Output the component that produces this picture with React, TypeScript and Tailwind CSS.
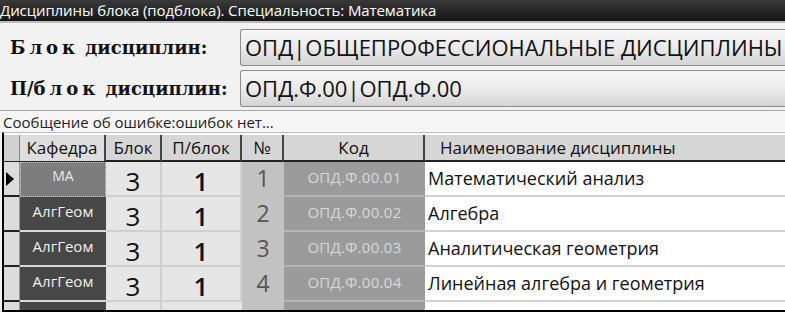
import React from "react";

const rows = [
  { kaf: "МА", n: "1", code: "ОПД.Ф.00.01", name: "Математический анализ", active: true },
  { kaf: "АлгГеом", n: "2", code: "ОПД.Ф.00.02", name: "Алгебра" },
  { kaf: "АлгГеом", n: "3", code: "ОПД.Ф.00.03", name: "Аналитическая геометрия" },
  { kaf: "АлгГеом", n: "4", code: "ОПД.Ф.00.04", name: "Линейная алгебра и геометрия" },
];

const cols = "grid grid-cols-[16px_86px_56px_80px_42px_141px_1fr]";

export default function App() {
  return (
    <div className="w-[785px] h-[312px] overflow-hidden bg-[#f2f2f2] flex flex-col" style={{ fontFamily: "'Open Sans', 'Noto Sans', sans-serif" }}>
      {/* Title bar */}
      <div className="h-[21px] shrink-0 bg-gradient-to-b from-[#3a3a3a] to-[#151515] text-white text-[15px] leading-[20px] whitespace-nowrap tracking-[-0.1px]">
        Дисциплины блока (подблока). Специальность: Математика
      </div>
      <div className="h-[2px] bg-[#bdbdbd] shrink-0" />
      {/* Form */}
      <div className="flex flex-col gap-[4px] pt-[6px] shrink-0">
        <div className="flex items-center h-[37px]">
          <div className="w-[240px] pl-[10px] font-bold text-[18px] text-[#111] whitespace-nowrap" style={{ fontFamily: "'DejaVu Serif', serif" }}>
            <span className="tracking-[4px]">Блок</span> дисциплин:
          </div>
          <div className="flex-1 h-[37px] border border-[#8c8c8c] border-r-0 rounded-l-[3px] bg-gradient-to-b from-[#f7f7f7] via-[#ebebeb] to-[#d4d4d4] flex items-center pl-[4px] text-[22px] text-[#111] whitespace-nowrap">
            ОПД|ОБЩЕПРОФЕССИОНАЛЬНЫЕ ДИСЦИПЛИНЫ
          </div>
        </div>
        <div className="flex items-center h-[37px]">
          <div className="w-[240px] pl-[10px] font-bold text-[18px] text-[#111] whitespace-nowrap" style={{ fontFamily: "'DejaVu Serif', serif" }}>
            П/<span className="tracking-[4px]">блок</span> дисциплин:
          </div>
          <div className="flex-1 h-[37px] border border-[#8c8c8c] border-r-0 rounded-l-[3px] bg-gradient-to-b from-[#f7f7f7] via-[#ebebeb] to-[#d4d4d4] flex items-center pl-[4px] text-[22px] text-[#111] whitespace-nowrap">
            ОПД.Ф.00|ОПД.Ф.00
          </div>
        </div>
      </div>
      {/* Status */}
      <div className="mt-[3px] border-t border-[#a8a8a8] h-[22px] bg-[#f6f6f6] shrink-0 text-[15px] leading-[22px] pl-[3px] text-[#222] whitespace-nowrap">
        Сообщение об ошибке:ошибок нет...
      </div>
      {/* Grid */}
      <div className="ml-[2px] border-l-2 border-black border-t border-t-[#bdbdbd] flex-1 flex flex-col bg-white pt-[2px]">
        <div className={`${cols} h-[27px] shrink-0 text-[17px] text-[#111] bg-[#d6d6d6] border-b-2 border-b-[#222]`}>
          <div className="bg-[#d0d0d0] border-r border-[#888]" />
          <div className="bg-[#dedede] border-r-2 border-[#444] flex items-center justify-center">Кафедра</div>
          <div className="border-r-2 border-[#444] flex items-center justify-center">Блок</div>
          <div className="border-r-2 border-[#444] flex items-center justify-center">П/блок</div>
          <div className="border-r-2 border-[#444] flex items-center justify-center">№</div>
          <div className="border-r-2 border-[#444] flex items-center justify-center">Код</div>
          <div className="flex items-center pl-[15px]">Наименование дисциплины</div>
        </div>
        {rows.map((r, i) => (
          <div key={i} className={`${cols} h-[35px] shrink-0`}>
            <div className="bg-[#dcdcdc] border-b-2 border-[#222] border-r border-r-[#999] flex items-center">
              {r.active && (
                <svg width="8" height="14" viewBox="0 0 8 14" className="ml-[2px]"><path d="M0 0 L8 7 L0 14 Z" fill="#000" /></svg>
              )}
            </div>
            {r.active ? (
              <div className="bg-[#7d7d7d] border border-dotted border-[#cfcfcf] flex items-start justify-center pt-[2px] text-[14px] text-[#eaeaea]">{r.kaf}</div>
            ) : (
              <div className="bg-[#474747] border-b-2 border-[#d8d8d8] flex items-start justify-center pt-[3px] text-[15px] text-[#f0f0f0]">{r.kaf}</div>
            )}
            <div className="bg-[#e6e6e6] border-b-2 border-r-2 border-[#cfcfcf] flex items-center justify-center text-[26px] text-[#111] leading-none pt-[4px]">3</div>
            <div className="bg-[#e6e6e6] border-b-2 border-r-2 border-[#cfcfcf] flex items-center justify-center text-[26px] font-semibold text-[#111] leading-none pt-[4px]">1</div>
            <div className="bg-[#c2c2c2] flex items-start justify-center pt-[3px] text-[23px] leading-[26px] text-[#555]">{r.n}</div>
            <div className="bg-[#9b9b9b] border-b-2 border-[#b4b4b4] flex items-start justify-center pt-[4px] text-[15px] tracking-[0.3px] text-[#d8d8d8]">{r.code}</div>
            <div className="bg-white border-b-2 border-[#d2d2d2] flex items-center pl-[3px] text-[18px] text-[#111] whitespace-nowrap">{r.name}</div>
          </div>
        ))}
        <div className={`${cols} flex-1`}>
          <div className="bg-[#dcdcdc] border-r border-r-[#999]" />
          <div className="bg-[#474747]" />
          <div className="bg-[#e6e6e6] border-r-2 border-[#cfcfcf]" />
          <div className="bg-[#e6e6e6]" />
          <div className="bg-[#c2c2c2]" />
          <div className="bg-[#9b9b9b]" />
          <div className="bg-white" />
        </div>
        <div className="h-[2px] bg-black shrink-0" />
      </div>
    </div>
  );
}
